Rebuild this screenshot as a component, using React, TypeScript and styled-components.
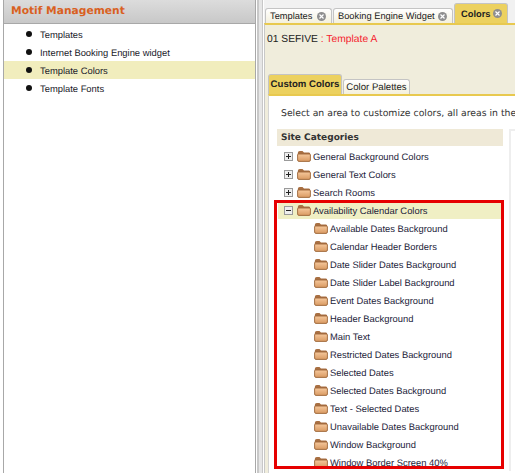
import React from 'react';
import styled, { createGlobalStyle } from 'styled-components';

const GlobalStyle = createGlobalStyle`
  html, body {
    margin: 0;
    padding: 0;
    width: 515px;
    height: 473px;
    overflow: hidden;
    background: #fff;
    font-family: "Liberation Sans", Arial, sans-serif;
    text-rendering: geometricPrecision;
  }
`;

const Page = styled.div`
  display: flex;
  width: 515px;
  height: 473px;
  overflow: hidden;
  background: #fff;
`;

const Sidebar = styled.aside`
  box-sizing: border-box;
  flex: none;
  width: 253px;
  margin-left: 3px;
  background: #fff;
  border-left: 1px solid #a8a8a8;
  border-right: 1px solid #a8a8a8;
`;

const SidebarHeader = styled.div`
  display: flex;
  align-items: center;
  gap: 3px;
  box-sizing: border-box;
  height: 24px;
  padding: 0 0 2px 7px;
  background: linear-gradient(#dcdcdc, #c8c8c8);
  border-bottom: 1px solid #a8a8a8;
`;

const SidebarTitle = styled.h1`
  margin: 0;
  font-family: "DejaVu Sans", Verdana, sans-serif;
  font-size: 10.7px;
  font-weight: 700;
  color: #d9601e;
  white-space: nowrap;
`;

const DottedRule = styled.div`
  flex: 1;
  height: 7px;
  background-image: radial-gradient(#b8b8b8 40%, transparent 45%);
  background-size: 2px 2px;
`;

const NavList = styled.ul`
  list-style: none;
  margin: 0;
  padding: 1px 0 0;
`;

const NavItem = styled.li<{ $active?: boolean }>`
  display: flex;
  align-items: center;
  height: 18px;
  padding-left: 22px;
  font-size: 9.4px;
  color: #1a1a2a;
  background: ${(p) => (p.$active ? '#f1edbd' : 'transparent')};
`;

const Bullet = styled.span`
  width: 6px;
  height: 6px;
  margin-right: 8px;
  border-radius: 50%;
  background: #111;
`;

const Splitter = styled.div`
  box-sizing: border-box;
  flex: none;
  width: 6px;
  margin: 0 1px;
  background: #e6e6e6;
  border-left: 2px solid #c8c8c8;
  border-right: 1px solid #c8c8c8;
`;

const Main = styled.main`
  display: flex;
  flex-direction: column;
  flex: 1;
  min-width: 0;
`;

const TabBar = styled.div`
  display: flex;
  align-items: flex-end;
  gap: 1px;
  box-sizing: border-box;
  height: 23px;
  padding-left: 1px;
  flex: none;
  background: #f1f1f1;
`;

const Tab = styled.div<{ $active?: boolean; $width: number }>`
  display: flex;
  align-items: center;
  justify-content: space-between;
  box-sizing: border-box;
  width: ${(p) => p.$width}px;
  height: ${(p) => (p.$active ? '20px' : '15px')};
  padding: 0 5px 0 ${(p) => (p.$active ? '6px' : '4px')};
  border: 1px solid #c4c4c4;
  border-bottom: none;
  border-radius: 3px 3px 0 0;
  font-size: 9.3px;
  color: #222;
  font-weight: ${(p) => (p.$active ? 700 : 400)};
  background: ${(p) => (p.$active ? '#ecd15f' : 'linear-gradient(#fff, #f4f0dc)')};
  white-space: nowrap;
`;

const CloseDot = styled.span`
  display: flex;
  align-items: center;
  justify-content: center;
  width: 9px;
  height: 9px;
  border-radius: 50%;
  background: #8f8f8f;
`;

const Content = styled.div`
  flex: 1;
  min-height: 0;
  padding: 8px 0 0 3px;
  background: #f0eddc;
  border-top: 2px solid #e8c94f;
  border-left: 1px solid #c8c8c8;
`;

const TemplateLine = styled.div`
  margin-left: -1px;
  font-size: 10.3px;
  line-height: 13px;
  color: #222;
  height: 41px;
  span {
    color: #f5222d;
  }
`;

const InnerTabs = styled.div`
  display: flex;
  align-items: flex-end;
  gap: 1px;
  height: 20px;
`;

const InnerTab = styled.div<{ $active?: boolean }>`
  display: flex;
  align-items: center;
  justify-content: center;
  box-sizing: border-box;
  width: ${(p) => (p.$active ? '74px' : '67px')};
  height: ${(p) => (p.$active ? '20px' : '15px')};
  border: 1px solid #c4c4c4;
  border-bottom: none;
  border-radius: 3px 3px 0 0;
  font-size: 9.6px;
  color: #222;
  font-weight: ${(p) => (p.$active ? 700 : 400)};
  background: ${(p) => (p.$active ? '#ecd15f' : 'linear-gradient(#fff, #f4f0dc)')};
`;

const TabPanel = styled.div`
  height: 400px;
  padding: 11px 0 0 8px;
  overflow: hidden;
  background: #fff;
  border-top: 2px solid #e8c94f;
  border-left: 1px solid #d4d4d4;
`;

const Hint = styled.p`
  margin: 0 0 9px 4px;
  font-family: "DejaVu Sans", Verdana, sans-serif;
  font-size: 9.3px;
  line-height: 13px;
  color: #333;
  white-space: nowrap;
`;

const Columns = styled.div`
  display: flex;
  gap: 6px;
`;

const CategoryPanel = styled.div`
  flex: none;
  width: 226px;
`;

const DetailPanel = styled.div`
  flex: none;
  width: 20px;
  height: 340px;
  background: #fff;
  border-left: 2px solid #eeeeee;
  border-top: 2px solid #eeeeee;
`;

const CategoryHeader = styled.div`
  display: flex;
  align-items: center;
  height: 17px;
  padding-left: 4px;
  background: #efe9d7;
  font-family: "DejaVu Sans", Verdana, sans-serif;
  font-size: 9px;
  font-weight: 700;
  color: #333;
`;

const CategoryList = styled.div`
  padding-top: 1px;
`;

const CategoryRow = styled.div<{ $selected?: boolean; $child?: boolean }>`
  display: flex;
  align-items: center;
  height: 18px;
  padding-left: ${(p) => (p.$child ? '36px' : p.$selected ? '6px' : '7px')};
  font-size: 9.4px;
  color: #23233a;
  white-space: nowrap;
  background: ${(p) => (p.$selected ? '#f0efc4' : 'transparent')};
`;

const Toggle = styled.span`
  display: flex;
  align-items: center;
  justify-content: center;
  box-sizing: border-box;
  width: 9px;
  height: 9px;
  margin-right: 4px;
  border: 1px solid #9a9a9a;
  background: #eee;
`;

const FolderIcon = styled.svg`
  flex: none;
  width: 14px;
  height: 12px;
  margin-right: 2px;
`;

const Highlighted = styled.div`
  box-sizing: border-box;
  width: 230px;
  height: 269px;
  margin: -1px 0 0 -3px;
  padding-left: 1px;
  overflow: hidden;
  border: 3px solid #e60000;

  & > :first-child {
    margin-top: -2px;
  }
`;

const collapsed = ['General Background Colors', 'General Text Colors', 'Search Rooms'];

const calendarItems = [
  'Available Dates Background',
  'Calendar Header Borders',
  'Date Slider Dates Background',
  'Date Slider Label Background',
  'Event Dates Background',
  'Header Background',
  'Main Text',
  'Restricted Dates Background',
  'Selected Dates',
  'Selected Dates Background',
  'Text - Selected Dates',
  'Unavailable Dates Background',
  'Window Background',
  'Window Border Screen 40%',
];

const Folder = () => (
  <FolderIcon viewBox="0 0 14 12">
    <defs>
      <linearGradient id="folderFill" x1="0" y1="0" x2="0" y2="1">
        <stop offset="0" stopColor="#f6c89c" />
        <stop offset="1" stopColor="#d99a62" />
      </linearGradient>
    </defs>
    <path d="M0.8 3 Q0.8 1 2.8 1 H5.5 L7 2.5 H12 Q13.2 2.5 13.2 4 V6 H0.8Z" fill="#a86f42" />
    <path
      d="M0.6 5 Q0.6 4 1.6 4 H12.4 Q13.4 4 13.4 5 V10 Q13.4 11.4 12 11.4 H2 Q0.6 11.4 0.6 10Z"
      fill="url(#folderFill)"
      stroke="#9c6538"
      strokeWidth="0.9"
    />
  </FolderIcon>
);

const Close = () => (
  <CloseDot>
    <svg width="5" height="5" viewBox="0 0 5 5">
      <path d="M0.5 0.5 L4.5 4.5 M4.5 0.5 L0.5 4.5" stroke="#fff" strokeWidth="1.2" />
    </svg>
  </CloseDot>
);

const PlusMinus = ({ open }: { open?: boolean }) => (
  <Toggle>
    <svg width="5" height="5" viewBox="0 0 5 5">
      <path d={open ? 'M0 2.5 H5' : 'M0 2.5 H5 M2.5 0 V5'} stroke="#222" strokeWidth="1" />
    </svg>
  </Toggle>
);

export default function App() {
  return (
    <Page>
      <GlobalStyle />
      <Sidebar>
        <SidebarHeader>
          <SidebarTitle>Motif Management</SidebarTitle>
          <DottedRule />
        </SidebarHeader>
        <NavList>
          <NavItem><Bullet />Templates</NavItem>
          <NavItem><Bullet />Internet Booking Engine widget</NavItem>
          <NavItem $active><Bullet />Template Colors</NavItem>
          <NavItem><Bullet />Template Fonts</NavItem>
        </NavList>
      </Sidebar>
      <Splitter />
      <Main>
        <TabBar>
          <Tab $width={67}>Templates <Close /></Tab>
          <Tab $width={120}>Booking Engine Widget <Close /></Tab>
          <Tab $active $width={54}>Colors <Close /></Tab>
        </TabBar>
        <Content>
          <TemplateLine>01 SEFIVE <span>: Template A</span></TemplateLine>
          <InnerTabs>
            <InnerTab $active>Custom Colors</InnerTab>
            <InnerTab>Color Palettes</InnerTab>
          </InnerTabs>
          <TabPanel>
            <Hint>Select an area to customize colors, all areas in the</Hint>
            <Columns>
              <CategoryPanel>
                <CategoryHeader>Site Categories</CategoryHeader>
                <CategoryList>
                  {collapsed.map((label) => (
                    <CategoryRow key={label}>
                      <PlusMinus />
                      <Folder />
                      {label}
                    </CategoryRow>
                  ))}
                  <Highlighted>
                    <CategoryRow $selected>
                      <PlusMinus open />
                      <Folder />
                      Availability Calendar Colors
                    </CategoryRow>
                    {calendarItems.map((label) => (
                      <CategoryRow $child key={label}>
                        <Folder />
                        {label}
                      </CategoryRow>
                    ))}
                  </Highlighted>
                </CategoryList>
              </CategoryPanel>
              <DetailPanel />
            </Columns>
          </TabPanel>
        </Content>
      </Main>
    </Page>
  );
}
